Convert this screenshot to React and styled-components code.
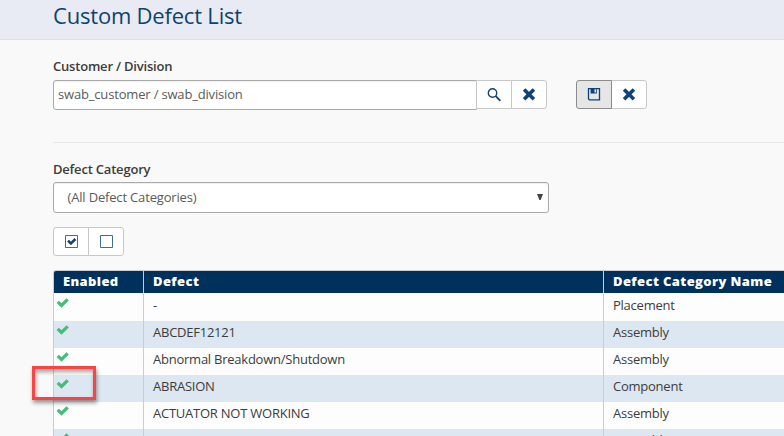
import React from 'react';
import styled, { createGlobalStyle } from 'styled-components';

const GlobalStyle = createGlobalStyle`
  * { box-sizing: border-box; }
  body {
    margin: 0;
    overflow: hidden;
    background: #f9f9f9;
    color: #3c3c3c;
    font: 13px/18px "Open Sans", "Noto Sans", sans-serif;
  }
`;

const Page = styled.div`
  width: 784px;
  height: 436px;
  overflow: hidden;
  position: relative;
`;

const TitleBar = styled.header`
  height: 40px;
  padding: 0 0 0 53px;
  background: #e8ebf3;
  border-bottom: 1px solid #dcdfe4;
`;

const Title = styled.h1`
  margin: 0;
  color: #0f426f;
  font-size: 22px;
  line-height: 30px;
  font-weight: 400;
  letter-spacing: -0.2px;
`;

const Content = styled.main`
  padding-left: 53px;
`;

const Section = styled.section`
  padding-top: ${(p) => p.$top}px;
  height: ${(p) => p.$height}px;
  border-bottom: ${(p) => (p.$divided ? '1px solid #e8e8e8' : '0')};
`;

const Label = styled.label`
  display: block;
  height: ${(p) => p.$height || 23}px;
  line-height: 18px;
  font-weight: 600;
  font-size: 13px;
  letter-spacing: -0.2px;
`;

const Row = styled.div`
  display: flex;
`;

const TextField = styled.div`
  width: 424px;
  height: 30px;
  padding: 0 4px;
  border: 1px solid #aaa;
  border-radius: 3px 0 0 3px;
  background: #fff;
  box-shadow: inset 0 1px 1px #eee;
  color: #5a5a5a;
  line-height: 27px;
  letter-spacing: -0.17px;
`;

const ButtonGroup = styled.div`
  display: flex;
  margin-left: ${(p) => p.$gap || 0}px;
  margin-top: ${(p) => p.$top || 0}px;
`;

const IconButton = styled.button`
  width: 36px;
  height: 29px;
  margin: 0 0 0 -1px;
  padding: 0;
  display: flex;
  align-items: center;
  justify-content: center;
  position: relative;
  z-index: ${(p) => (p.$active ? 1 : 0)};
  border: 1px solid ${(p) => (p.$active ? '#8c8c8c' : '#c8c8c8')};
  background: ${(p) => (p.$active ? '#e6e6e6' : '#fff')};
  color: #10427a;
  &:first-child { border-radius: ${(p) => (p.$attached ? '0' : '3px 0 0 3px')}; }
  &:first-child { margin-left: ${(p) => (p.$attached ? '-1px' : '0')}; }
  &:last-child { border-radius: 0 3px 3px 0; }
  svg { display: block; }
`;

const Select = styled.div`
  width: 496px;
  height: 31px;
  padding: 0 5px 2px 13.5px;
  display: flex;
  align-items: center;
  justify-content: space-between;
  border: 1px solid #aaa;
  border-radius: 3px;
  background: #fff;
  box-shadow: inset 0 1px 1px #eee;
  color: #5a5a5a;
  letter-spacing: -0.17px;
`;

const Grid = styled.div`
  width: 760px;
  margin-top: 14px;
  border: 1px solid #ccc;
  border-bottom: 0;
  border-radius: 3px 0 0 0;
  overflow: hidden;
`;

const GridRow = styled.div`
  display: grid;
  grid-template-columns: 90px 460px 1fr;
  height: ${(p) => (p.$first ? 28 : 27)}px;
  padding-top: ${(p) => (p.$first ? 1 : 0)}px;
  background: ${(p) => (p.$striped ? '#dde7f1' : '#fdfdfd')};
`;

const GridHead = styled(GridRow)`
  height: 22px;
  background: #00305c;
  color: #fff;
`;

const Cell = styled.div`
  padding: 2px 9px 0;
  border-right: 1px solid #ccc;
  white-space: nowrap;
  letter-spacing: -0.24px;
`;

const HeadCell = styled(Cell)`
  padding-top: 1px;
  font-weight: 800;
  letter-spacing: 0.38px;
`;

const CheckCell = styled(Cell)`
  padding: 3px 0 0 2px;
  svg { display: block; }
`;

const Highlight = styled.div`
  position: absolute;
  left: 32px;
  top: 366px;
  width: 64px;
  height: 34px;
  border: 3px solid #fa4444;
  box-shadow: 1px 3px 4px rgba(0, 0, 0, 0.4), inset 1px 3px 4px rgba(0, 0, 0, 0.35);
`;

const CheckIcon = () => (
  <svg width="14" height="11" viewBox="0 0 14 11">
    <path d="M1.7 4.9 5.5 8.5 11.7 2.4" fill="none" stroke="#43bd78" strokeWidth="3.2" />
  </svg>
);

const SearchIcon = () => (
  <svg width="14" height="14" viewBox="0 0 14 14" fill="none" stroke="currentColor">
    <circle cx="5.5" cy="5" r="4.2" strokeWidth="1.4" />
    <path d="m8.7 8.2 4.6 4.6" strokeWidth="1.9" />
  </svg>
);

const CrossIcon = () => (
  <svg width="14" height="14" viewBox="0 0 14 14">
    <path d="m2.1 1.4 9.8 9.8M11.9 1.4 2.1 11.2" fill="none" stroke="currentColor" strokeWidth="3.6" />
  </svg>
);

const SaveIcon = () => (
  <svg width="14" height="14" viewBox="0 0 14 14">
    <path d="M1.5 .5h11v11.4h-10l-1-1Z" fill="none" stroke="currentColor" strokeWidth="1.3" />
    <path d="M3.6 1h6.2v4.5H3.6Z" fill="currentColor" />
    <path d="M7.5 1.2H9v3.3H7.5Z" fill="#e6e6e6" />
  </svg>
);

const BoxIcon = ({ checked }) => (
  <svg width="14" height="14" viewBox="0 0 14 14" fill="none" stroke="currentColor">
    <path d="M1.5 .5h12v12h-12Z" stroke="#416b9c" />
    {checked && <path d="m4 5.6 2.9 2.9L11.4 4" strokeWidth="2.5" />}
  </svg>
);

const Caret = () => (
  <svg width="6" height="6" viewBox="0 0 6 6">
    <path d="M0 0h6L3.6 6H2.4Z" fill="#444" />
  </svg>
);

const defects = [
  ['-', 'Placement'],
  ['ABCDEF12121', 'Assembly'],
  ['Abnormal Breakdown/Shutdown', 'Assembly'],
  ['ABRASION', 'Component'],
  ['ACTUATOR NOT WORKING', 'Assembly'],
  ['', 'Assembly'],
];

export default function App() {
  return (
    <Page>
      <GlobalStyle />
      <TitleBar><Title>Custom Defect List</Title></TitleBar>
      <Content>
        <Section $top={17} $height={103} $divided>
          <Label>Customer / Division</Label>
          <Row>
            <TextField>swab_customer / swab_division</TextField>
            <ButtonGroup>
              <IconButton $attached aria-label="Search"><SearchIcon /></IconButton>
              <IconButton aria-label="Clear"><CrossIcon /></IconButton>
            </ButtonGroup>
            <ButtonGroup $gap={29}>
              <IconButton $active aria-label="Save"><SaveIcon /></IconButton>
              <IconButton aria-label="Cancel"><CrossIcon /></IconButton>
            </ButtonGroup>
          </Row>
        </Section>
        <Section $top={17} $height={113}>
          <Label $height={22}>Defect Category</Label>
          <Select>(All Defect Categories)<Caret /></Select>
          <ButtonGroup $top={14}>
            <IconButton aria-label="Enable all"><BoxIcon checked /></IconButton>
            <IconButton aria-label="Disable all"><BoxIcon /></IconButton>
          </ButtonGroup>
        </Section>
        <Grid>
          <GridHead>
            <HeadCell>Enabled</HeadCell>
            <HeadCell>Defect</HeadCell>
            <HeadCell>Defect Category Name</HeadCell>
          </GridHead>
          {defects.map(([name, category], i) => (
            <GridRow key={i} $first={i === 0} $striped={i % 2 === 1}>
              <CheckCell><CheckIcon /></CheckCell>
              <Cell>{name}</Cell>
              <Cell>{category}</Cell>
            </GridRow>
          ))}
        </Grid>
      </Content>
      <Highlight />
    </Page>
  );
}
